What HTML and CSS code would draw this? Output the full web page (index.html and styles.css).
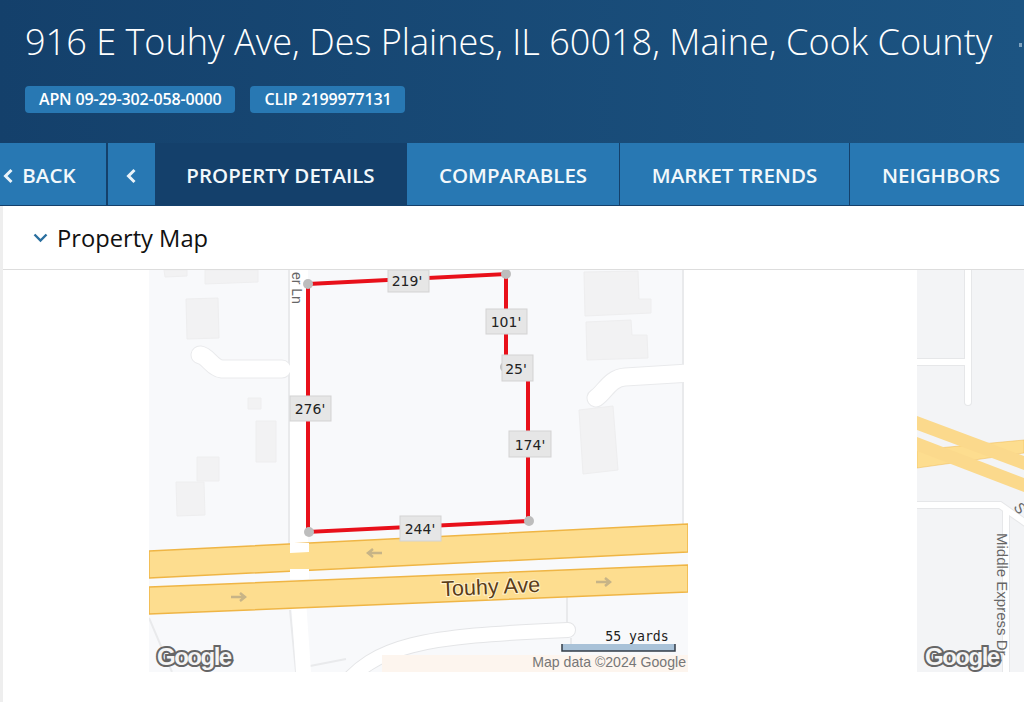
FILE: index.html
```html
<!DOCTYPE html>
<html lang="en">
<head>
	<meta charset="UTF-8">
	<title>Property Details</title>
	<link rel="stylesheet" href="styles.css">
</head>
<body>
	<!-- address header -->
	<div class="header">
		<h1>916 E Touhy Ave, Des Plaines, IL 60018, Maine, Cook County<span class="star"></span></h1>
		<div class="tags">
			<span class="tag">APN 09-29-302-058-0000</span>
			<span class="tag">CLIP 2199977131</span>
		</div>
	</div>
	<!-- tabs -->
	<div class="nav">
		<a class="back">
			<svg class="chev" width="12" height="16" viewBox="0 0 12 16"><path d="M9.500 2 3.500 8 9.500 14" fill="none" stroke="#eaf3f9" stroke-width="3"/></svg>
			BACK
		</a>
		<a class="prev">
			<svg class="chev" width="12" height="16" viewBox="0 0 12 16"><path d="M9.500 2 3.500 8 9.500 14" fill="none" stroke="#eaf3f9" stroke-width="3"/></svg>
		</a>
		<a class="tab active">PROPERTY DETAILS</a>
		<a class="tab comparables">COMPARABLES</a>
		<a class="tab trends">MARKET TRENDS</a>
		<a class="tab neighbors">NEIGHBORS</a>
	</div>
	<div class="content">
		<div class="section-head">
			<svg width="15" height="10" viewBox="0 0 15 10"><path d="M1.500 1.500 7.500 7.500 13.500 1.500" fill="none" stroke="#2a6f9f" stroke-width="2.400"/></svg>
			<h2>Property Map</h2>
		</div>
		<div class="maps">
			<!-- aerial parcel map -->
			<div class="map map-main">
				<svg width="539" height="402" viewBox="149 270 539 402">
					<rect x="149" y="270" width="539" height="402" fill="#f8f9fb"/>
					<!-- buildings -->
					<g fill="#f2f2f3" stroke="#eeeeef">
						<path d="M164 270h23v6l-22 1z"/>
						<path d="M205 270h53l0 12-53 2z"/>
						<path d="M186 299l32-1 1 40-32 1z"/>
						<path d="M248 398h13v11h-13z"/>
						<path d="M256 421h20v41h-20z"/>
						<path d="M197 457h22v24h-22z"/>
						<path d="M176 482h28l1 33-28 1z"/>
						<path d="M584 272 638 271 639 299 651 299 651 313 585 316z"/>
						<path d="M586 322 631 320 632 335 647 335 648 358 587 360z"/>
						<path d="M579 410 613 406 618 470 583 474z"/>
					</g>
					<!-- side streets -->
					<g fill="none" stroke="#e9eaec" stroke-width="2">
						<path d="M289 270V545M290 610 296 672"/>
						<path d="M683 270V525M567 595V622M571 638V652"/>
						<path d="M149 618 172 672M310 666 346 659"/>
					</g>
					<g fill="none" stroke="#e9eaec" stroke-width="19" stroke-linecap="round">
						<path d="M282 369H222C212 368 208 356 200 355"/>
						<path d="M690 373 625 377C610 378 605 392 596 398"/>
					</g>
					<g fill="none" stroke="#e4e5e7" stroke-width="16" stroke-linecap="round">
						<path d="M340 690C375 645 420 636 568 630"/>
					</g>
					<path d="M290 270H308V545H290zM291 600H306L311 672H296z" fill="#fff"/>
					<path d="M684 270H688V525H684z" fill="#fff"/>
					<g fill="none" stroke="#fff" stroke-width="17" stroke-linecap="round">
						<path d="M282 369H222C212 368 208 356 200 355"/>
						<path d="M690 373 625 377C610 378 605 392 596 398"/>
					</g>
					<path d="M340 690C375 645 420 636 568 630" fill="none" stroke="#fff" stroke-width="14" stroke-linecap="round"/>
					<path d="M382 655H688V672H382z" fill="#fdf5ee"/>
					<!-- touhy ave -->
					<path d="M149 551 688 524V552L149 578z" fill="#fddd8f" stroke="#efb545" stroke-width="1.500"/>
					<path d="M149 587 688 565V592L149 614z" fill="#fddd8f" stroke="#efb545" stroke-width="1.500"/>
					<path d="M290 543H309V552L290 553zM290 569H309V579H290z" fill="#fff"/>
					<g fill="none" stroke="#c7b487" stroke-width="2.500">
						<path d="M382 553H368M373 549 368 553 373 557"/>
						<path d="M231 597H245M240 593 245 597 240 601"/>
						<path d="M596 582H610M605 578 610 582 605 586"/>
					</g>
					<text class="road-name" x="491" y="594" transform="rotate(-2.500 491 594)">Touhy Ave</text>
					<text class="lane-name" transform="translate(292 272) rotate(90)">er Ln</text>
					<!-- parcel outline -->
					<path d="M308 284 506 274V367L528 367V521L308 532Z" fill="none" stroke="#e8101a" stroke-width="4"/>
					<g fill="#bdbdbd">
						<circle cx="308" cy="284" r="5"/>
						<circle cx="506" cy="274" r="5"/>
						<circle cx="505" cy="367" r="5"/>
						<circle cx="529" cy="521" r="5"/>
						<circle cx="309" cy="532" r="5"/>
					</g>
					<!-- measurements -->
					<g class="dim">
						<rect x="388" y="270" width="41" height="22"/><text x="407" y="286">219'</text>
						<rect x="486" y="309" width="41" height="25"/><text x="506" y="327">101'</text>
						<rect x="502" y="355" width="31" height="26"/><text x="516" y="374">25'</text>
						<rect x="290" y="396" width="41" height="25"/><text x="310" y="414">276'</text>
						<rect x="509" y="431" width="42" height="26"/><text x="530" y="450">174'</text>
						<rect x="400" y="516" width="41" height="25"/><text x="420" y="534">244'</text>
					</g>
					<!-- scale -->
					<text class="scale-text" x="637" y="641">55 yards</text>
					<path d="M562 644V651H675V644" fill="#a9c2d8" stroke="#333d47" stroke-width="1.500"/>
					<text class="attrib" x="686" y="667">Map data ©2024 Google</text>
					<text class="google" x="157" y="665">Google</text>
				</svg>
			</div>
			<!-- second map, cut off by the window -->
			<div class="map map-side">
				<svg width="107" height="402" viewBox="917 270 107 402">
					<rect x="917" y="270" width="107" height="402" fill="#f3f4f6"/>
					<g fill="none" stroke="#e6e7e9" stroke-width="8" stroke-linecap="round">
						<path d="M968 270V402M917 362H966"/>
						<path d="M917 505H1000L1030 526M1006 510V680"/>
					</g>
					<g fill="none" stroke="#fff" stroke-width="6" stroke-linecap="round">
						<path d="M968 270V402M917 362H966"/>
						<path d="M917 505H1000L1030 526M1006 510V680"/>
					</g>
					<path d="M917 450 1024 440V453L917 468z" fill="#fddd8f" stroke="#f0b94f" stroke-width=".5"/>
					<path d="M917 416 1024 456V470L917 430z" fill="#fbd98c"/>
					<path d="M917 437 1024 478V492L917 451z" fill="#fbd98c"/>
					<text class="lane-name small" transform="translate(997 533) rotate(90)">Middle Express Dr</text>
					<text class="lane-name small" transform="translate(1013 507) rotate(55)">S</text>
					<text class="google" x="925" y="665">Google</text>
				</svg>
			</div>
		</div>
	</div>
</body>
</html>
```

FILE: styles.css
```css
body {
	margin: 0;
	padding: 0;
	width: 1024px;
	height: 702px;
	overflow: hidden;
	background-color: #FFF;
	font-family: "Open Sans", "Liberation Sans", sans-serif;
}

.header {
	height: 143px;
	padding: 18px 0 0 25px;
	box-sizing: border-box;
	background: linear-gradient(90deg, #14406B, #1C5482);
	color: #FFF;
}

h1 {
	margin: 0;
	font-size: 36.100px;
	font-weight: 300;
	line-height: 46px;
	white-space: nowrap;
}

.star {
	display: inline-block;
	width: 3px;
	height: 4px;
	margin-left: 27px;
	vertical-align: 8px;
	background-color: #7FA3BF;
}

.tags {
	display: flex;
	gap: 15px;
	margin-top: 22px;
}

.tag {
	height: 27px;
	padding: 0 14px;
	border-radius: 4px;
	background-color: #2878B3;
	font-size: 16px;
	font-weight: 600;
	letter-spacing: -0.150px;
	line-height: 27px;
}

.nav {
	display: flex;
	height: 63px;
	border-bottom: 1px solid #14406B;
	box-sizing: border-box;
	background-color: #2878B3;
	color: #F2F8FB;
	font-size: 20.500px;
	font-weight: 600;
	line-height: 62px;
	white-space: nowrap;
}

.nav a {
	display: block;
	box-sizing: border-box;
	flex: none;
	padding-top: 1px;
}

.back {
	width: 108px;
	padding-left: 2px;
	border-right: 2px solid #14406B;
}

.prev {
	width: 47px;
	padding-left: 17px;
}

.chev {
	margin-right: 3px;
	vertical-align: -1px;
}

.tab {
	text-align: center;
	border-right: 1px solid #14406B;
}

.active {
	width: 252px;
	background-color: #14406B;
}

.comparables {
	width: 213px;
}

.trends {
	width: 230px;
}

.neighbors {
	width: 183px;
}

.content {
	height: 497px;
	border-left: 3px solid #EEE;
}

.section-head {
	display: flex;
	align-items: center;
	gap: 9px;
	height: 64px;
	padding-left: 30px;
	box-sizing: border-box;
	border-bottom: 1px solid #DDD;
}

h2 {
	margin: 0;
	color: #111;
	font-size: 23.700px;
	font-weight: 400;
}

.maps {
	display: flex;
	gap: 229px;
	padding-left: 146px;
}

.map svg {
	display: block;
}

.road-name {
	fill: #5A3C18;
	font-family: "Liberation Sans", sans-serif;
	font-size: 21.500px;
	text-anchor: middle;
	paint-order: stroke;
	stroke: #FFF3D0;
	stroke-width: 2px;
}

.lane-name {
	fill: #666;
	font-family: "Liberation Sans", sans-serif;
	font-size: 14px;
}

.lane-name.small {
	font-size: 15px;
}

.dim rect {
	fill: #E6E6E6;
	stroke: #D3D3D3;
	stroke-width: 1;
}

.dim text {
	fill: #222;
	font-family: "DejaVu Sans", sans-serif;
	font-size: 14px;
	text-anchor: middle;
}

.scale-text {
	fill: #222;
	font-family: "DejaVu Sans Mono", monospace;
	font-size: 13.200px;
	text-anchor: middle;
}

.attrib {
	fill: #777;
	font-family: "Liberation Sans", sans-serif;
	font-size: 14.100px;
	text-anchor: end;
}

.google {
	fill: #F5F5F5;
	stroke: #666;
	stroke-width: 4px;
	paint-order: stroke;
	font-family: "Liberation Sans", sans-serif;
	font-size: 24px;
	font-weight: 700;
	letter-spacing: -1.500px;
}
```
